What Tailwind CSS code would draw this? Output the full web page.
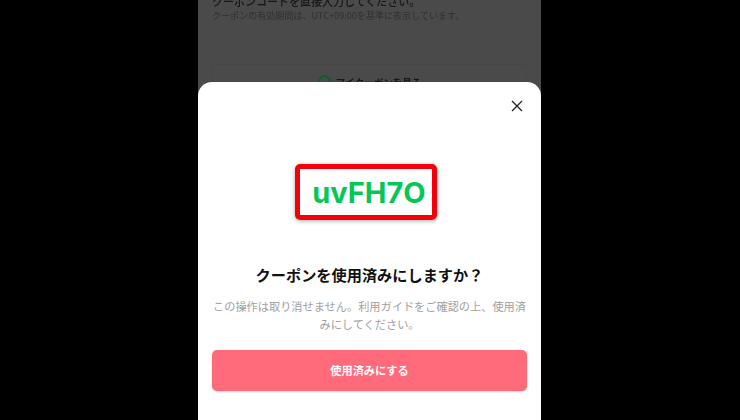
<!DOCTYPE html>
<html lang="ja">
  <head>
    <meta charset="UTF-8" />
    <title>クーポン</title>
    <script src="https://cdn.jsdelivr.net/npm/@tailwindcss/browser@4"></script>
  </head>
  <body class="bg-black h-[420px] overflow-hidden font-['Noto_Sans_CJK_JP','Noto_Sans',sans-serif]">
    <div class="relative w-[343px] h-[420px] ml-[198px] bg-[#4a4a4a] overflow-hidden">
      <!-- 背景ページ -->
      <div class="px-[14px] -mt-[6px] blur-[0.4px]">
        <p class="text-[11px] leading-[14px] text-[#161616] font-medium">クーポンコードを直接入力してください。</p>
        <p class="mt-[1px] text-[9px] leading-[14px] text-[#303030] tracking-[0.05px]">クーポンの有効期間は、UTC+09:00を基準に表示しています。</p>
        <div class="mt-[41px] h-[40px] border border-[#474747] flex justify-center gap-[5px] pt-[10px]">
          <span class="w-[13px] h-[13px] rounded-full border-2 border-[#0f5c2a]"></span>
          <span class="text-[9.5px] leading-[14px] font-bold text-[#161616]">マイクーポンを見る</span>
        </div>
      </div>

      <!-- モーダル -->
      <div class="absolute left-0 right-0 top-[82px] bottom-0 bg-white rounded-t-[14px] flex flex-col items-center px-[14px]">
        <button class="absolute right-[18px] top-[18px] w-[12px] h-[12px]">
          <svg viewBox="0 0 12 12" class="w-[12px] h-[12px]" fill="none" stroke="#222" stroke-width="1.3"><path d="M1 1l10 10M11 1L1 11" /></svg>
        </button>
        <div class="mt-[82px] mr-[7px] w-[142px] h-[56px] pl-[6px] border-[5px] border-[#f5000a] rounded-[5px] shadow-[0_1px_4px_rgba(0,0,0,0.35)] flex items-center justify-center">
          <span class="text-[29px] leading-none font-bold text-[#06c755] font-['Inter',sans-serif]">uvFH7O</span>
        </div>
        <h2 class="mt-[44px] text-[15.2px] leading-[20px] font-bold text-[#111] whitespace-nowrap">クーポンを使用済みにしますか？</h2>
        <p class="mt-[13px] -mx-[2px] text-[11.2px] leading-[18px] text-[#a0a0a0] text-center">この操作は取り消せません。利用ガイドをご確認の上、使用済みにしてください。</p>
        <button class="mt-[17px] w-full h-[41px] rounded-[5px] bg-[#ff6b7b] shadow-[0_1px_2px_rgba(0,0,0,0.15)] text-white text-[11.2px] font-bold">使用済みにする</button>
      </div>
    </div>
  </body>
</html>
